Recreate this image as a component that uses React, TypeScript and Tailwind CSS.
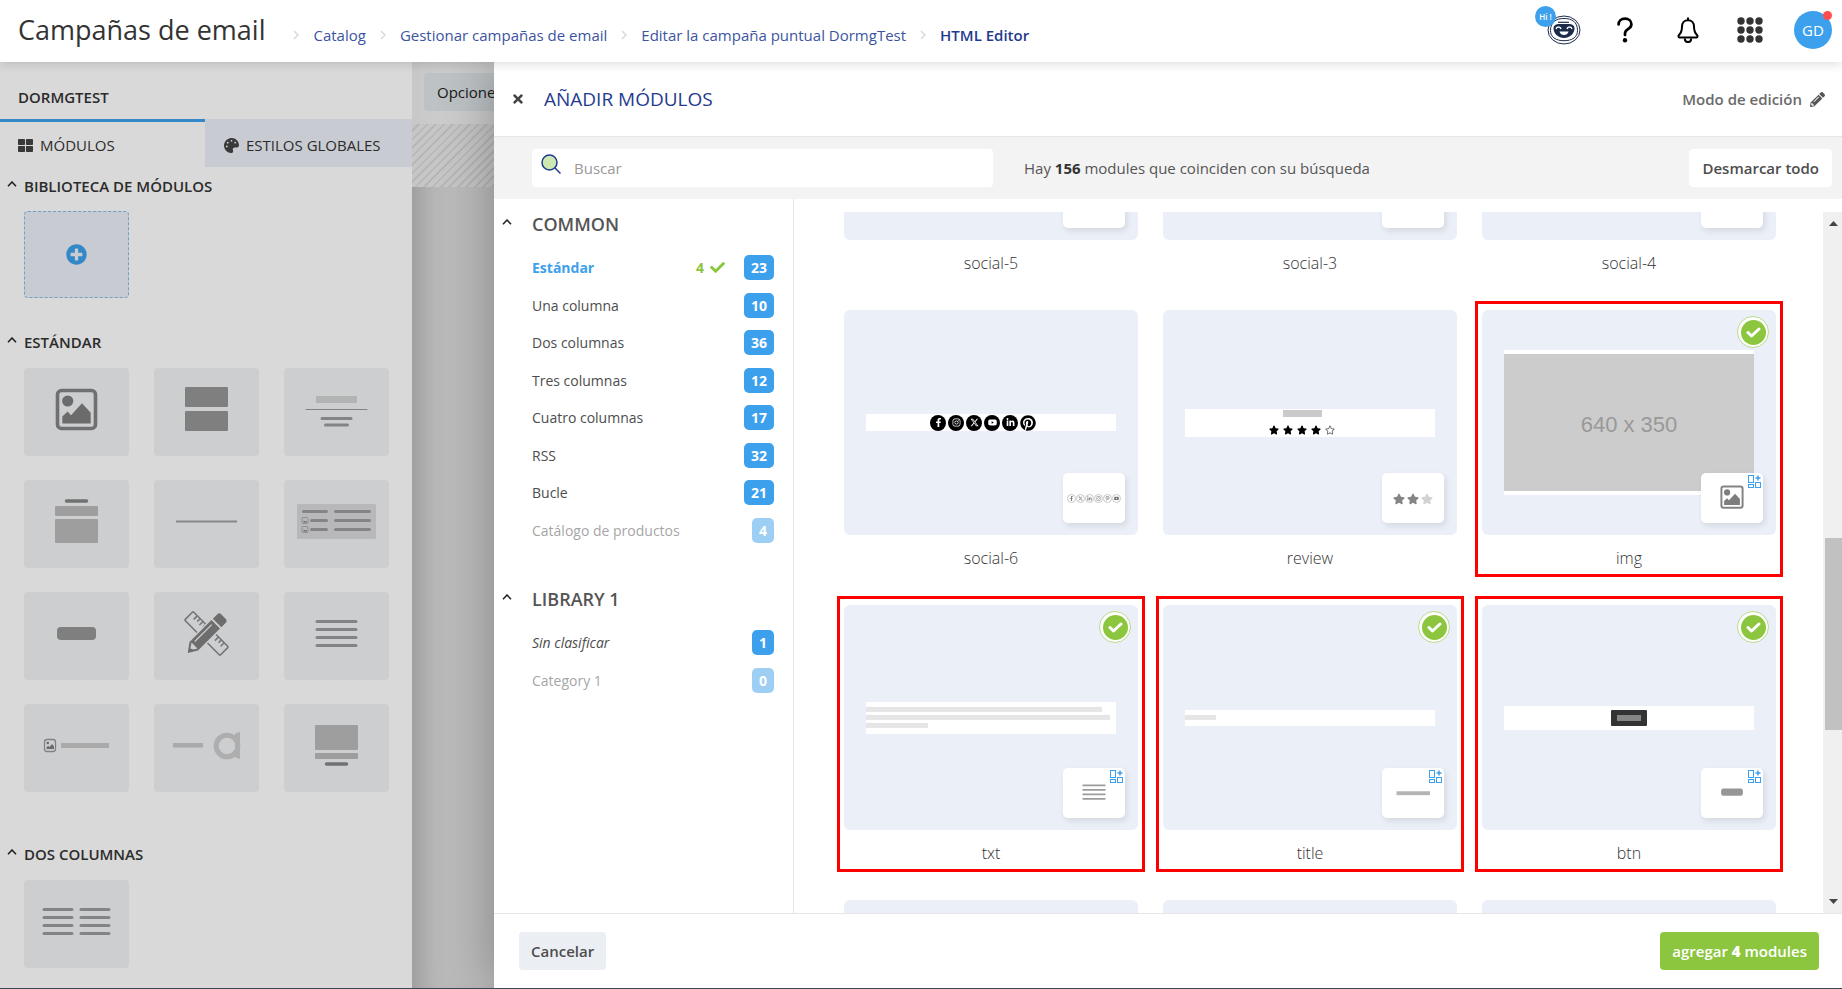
import { useState } from "react";
import type { ReactNode } from "react";
import {
  FaCheck,
  FaFacebookF,
  FaInstagram,
  FaLinkedinIn,
  FaPalette,
  FaPencilAlt,
  FaPinterest,
  FaPinterestP,
  FaPlusCircle,
  FaRegStar,
  FaStar,
  FaThLarge,
  FaTimes,
  FaYoutube,
} from "react-icons/fa";
import { FaXTwitter } from "react-icons/fa6";

/* ---------- glyphs for modules, all drawn on a 105x88 board ---------- */

function Board({ children }: { children: ReactNode }) {
  return (
    <svg viewBox="0 0 105 88" className="h-full w-full" fill="none" aria-hidden="true">
      {children}
    </svg>
  );
}

function Picture() {
  return (
    <g>
      <rect x="33.5" y="22.5" width="38" height="38" rx="4" stroke="#848484" strokeWidth="3.6" />
      <circle cx="43.7" cy="33" r="5.6" fill="#7e7e7e" />
      <path d="M38.3 55.5v-7l5.4-5 3.3 3.8 11-12 8.7 9.4v10.8z" fill="#7e7e7e" />
    </g>
  );
}

const glyphs: Record<string, ReactNode> = {
  image: <Picture />,
  blocks: (
    <g fill="#969696">
      <rect x="31" y="19" width="43" height="20" rx="1" />
      <rect x="31" y="43" width="43" height="20" rx="1" />
    </g>
  ),
  header: (
    <g strokeLinecap="round" stroke="#9c9c9c">
      <rect x="32" y="28" width="41" height="7" fill="#d2d4d3" stroke="none" />
      <path d="M22 41.5h61" strokeWidth="1" />
      <path d="M38 50.5h29M41.5 57h22" strokeWidth="3" />
    </g>
  ),
  card: (
    <g>
      <path d="M42.5 21h20" stroke="#858585" strokeWidth="3.5" strokeLinecap="round" />
      <rect x="31" y="26" width="43" height="10" rx="1" fill="#bababa" />
      <rect x="31" y="39" width="43" height="24" rx="1" fill="#bababa" />
    </g>
  ),
  divider: <path d="M22 41.5h61" stroke="#a0a0a0" strokeWidth="2" />,
  table: (
    <g>
      <rect x="13" y="24" width="79" height="35" rx="1" fill="#d9d9dc" />
      <path
        d="M19.5 31.5h23M51.5 31.5h34M27.5 40.5h15M51.5 40.5h34M27.5 49.5h15M51.5 49.5h34"
        stroke="#9c9c9c"
        strokeWidth="3"
        strokeLinecap="round"
      />
      <g stroke="#a8a8a8">
        <rect x="18" y="37.5" width="6" height="6" rx="1" />
        <rect x="18" y="46.5" width="6" height="6" rx="1" />
      </g>
      <path d="M19.5 42.5v-2l2 1 1.5-.5v1.5zM19.5 51.5v-2l2 1 1.5-.5v1.5z" fill="#7e7e7e" />
    </g>
  ),
  button: <rect x="33" y="35" width="39" height="13" rx="4" fill="#969696" />,
  design: (
    <g transform="translate(52.5 41.5)">
      <g transform="rotate(45)" stroke="#8a8a8a" strokeWidth="1.6">
        <rect x="-25" y="-6" width="50" height="12" rx="1" />
        <path d="M-19-6v5M-15-6v4M-11-6v5M-7-6v4M11-6v5M15-6v4M19-6v5" />
      </g>
      <g transform="rotate(-45)">
        <path d="M-28 0l10-7.5H27v15h-45z" fill="#f1f2f5" />
        <path d="M-27 .5l9-6.5h31v12h-31z" fill="#808080" />
        <path d="M-22-.8l5-3.4v8.4l-3.5-2z" fill="#f1f2f5" />
        <path d="M-14-2.6h24" stroke="#f1f2f5" strokeWidth="1.3" />
        <path d="M15-6h6a3 3 0 013 3v6a3 3 0 01-3 3h-6z" fill="#808080" />
      </g>
    </g>
  ),
  text: (
    <path
      d="M33 29.5h39M33 37.5h39M33 45.5h39M33 53.5h39"
      stroke="#9c9c9c"
      strokeWidth="3"
      strokeLinecap="round"
    />
  ),
  imageText: (
    <g>
      <rect x="20.5" y="35.5" width="11" height="12" rx="2.5" stroke="#9a9a9a" strokeWidth="1.3" />
      <circle cx="23.8" cy="39" r="1.3" fill="#7e7e7e" />
      <path d="M22.5 45v-2l1.8-1 1.2 1 2.5-3 2 2.5V45z" fill="#7e7e7e" />
      <rect x="37" y="39" width="48" height="5" fill="#c8c8c8" />
    </g>
  ),
  textLogo: (
    <g>
      <rect x="19" y="39" width="30" height="4.5" fill="#c8c8c8" />
      <circle cx="73" cy="42" r="10.8" stroke="#cdcdcd" strokeWidth="5" />
      <path d="M81 29.5l5-1.8V55l-5-1.5z" fill="#cdcdcd" />
    </g>
  ),
  hero: (
    <g>
      <rect x="31" y="21" width="43" height="25" rx="1" fill="#bababa" />
      <rect x="31" y="49" width="43" height="6" rx="1" fill="#bababa" />
      <path d="M42.5 60h20" stroke="#858585" strokeWidth="3.5" strokeLinecap="round" />
    </g>
  ),
  twoText: (
    <path
      d="M20 29.5h28M20 37.5h28M20 45.5h28M20 53.5h28M57 29.5h28M57 37.5h28M57 45.5h28M57 53.5h28"
      stroke="#9c9c9c"
      strokeWidth="3"
      strokeLinecap="round"
    />
  ),
  title: <rect x="23" y="40" width="60" height="7" fill="#b4b4b4" />,
};

const standardTiles = [
  "image", "blocks", "header", "card", "divider", "table",
  "button", "design", "text", "imageText", "textLogo", "hero",
];

function Caret() {
  return (
    <svg viewBox="0 0 10 6" className="h-[6px] w-[10px]" fill="none" stroke="#222" strokeWidth="1.5" aria-hidden="true">
      <path d="M1 5.2L5 1l4 4.2" />
    </svg>
  );
}

/* ---------- top bar ---------- */

const crumbs = ["Catalog", "Gestionar campañas de email", "Editar la campaña puntual DormgTest"];

function CrumbArrow() {
  return (
    <svg viewBox="0 0 6 10" className="h-[10px] w-[6px]" fill="none" stroke="#d9d9d9" strokeWidth="1.5" aria-hidden="true">
      <path d="M1 1l4 4-4 4" />
    </svg>
  );
}

function TopBar() {
  return (
    <header className="relative z-30 flex h-[62px] shrink-0 items-center justify-between bg-white pr-[10px] pb-[2px] pl-[18px] shadow-[0_2px_10px_rgba(0,0,0,0.14)]">
      <div className="flex items-baseline">
        <h1 className="text-[27px] leading-[38px] text-[#333]">Campañas de email</h1>
        <nav aria-label="Breadcrumb" className="ml-[28px] flex items-center text-[15px] text-[#3c54a0]">
          {crumbs.map((c) => (
            <span key={c} className="flex items-center">
              <CrumbArrow />
              <a href="#" className="mx-[14px]">{c}</a>
            </span>
          ))}
          <CrumbArrow />
          <span className="ml-[14px] font-semibold text-[#1f3b8f]">HTML Editor</span>
        </nav>
      </div>
      <div className="flex items-center">
        <button type="button" aria-label="Asistente" className="relative mr-[36px] h-[30px] w-[34px]">
          <svg viewBox="0 0 34 30" className="h-full w-full" fill="none" aria-hidden="true">
            <ellipse cx="17" cy="15" rx="16" ry="14" stroke="#1d2b4b" strokeWidth="1" />
            <path d="M7 23C4.5 21 3.5 18.5 3.5 15.5 3.5 7 9 3.5 17 3.5S30.5 7 30.5 15.5c0 3-1 5.5-3.5 7.5-3 2-6 2.7-10 2.7S10 25 7 23z" stroke="#1d2b4b" strokeWidth="1" />
            <path d="M11 7.3h11" stroke="#1d2b4b" strokeWidth="1.2" />
            <path d="M6.5 13.5c0-3.5 3-4.5 5.5-4.5h10c2.5 0 5.5 1 5.5 4.5 0 5-5 9.5-10.5 9.5S6.5 18.5 6.5 13.5z" fill="#1d2b4b" />
            <path d="M9 14c.5-2.6 4.5-2.6 5 0M20 14c.5-2.6 4.5-2.6 5 0" stroke="#fff" strokeWidth="1.4" />
            <path d="M12.5 16.5h9c-.5 2.5-2.5 3.5-4.5 3.5s-4-1-4.5-3.5z" fill="#fff" />
          </svg>
          <span className="absolute -top-[9px] -left-[12px] flex size-[21px] items-center justify-center rounded-full bg-[#3da0ec] text-[8px] font-semibold text-white">
            Hi !
          </span>
        </button>
        <button type="button" aria-label="Ayuda" className="mr-[44px] h-[26px] w-[16px]">
          <svg viewBox="0 0 16 26" className="h-full w-full" fill="none" aria-hidden="true">
            <path d="M1.6 7.5C1.6 4 4.3 1.7 8 1.7s6.4 2.3 6.4 5.5c0 2.6-1.6 3.9-3.4 5-2 1.3-3 2.3-3 4.4v1.4" stroke="#000" strokeWidth="2.7" strokeLinecap="round" />
            <circle cx="8" cy="23.3" r="2.2" fill="#000" />
          </svg>
        </button>
        <button type="button" aria-label="Notificaciones" className="mr-[38px] h-[26px] w-[22px]">
          <svg viewBox="0 0 22 26" className="h-full w-full" fill="none" aria-hidden="true">
            <path d="M11 1.2v2M11 3.2c-4 0-6 3-6 6.3 0 5-1.2 6.8-3 8.5-1 1-.6 2.6.8 2.6h16.4c1.4 0 1.8-1.6.8-2.6-1.8-1.7-3-3.5-3-8.5 0-3.3-2-6.3-6-6.3z" stroke="#000" strokeWidth="2" strokeLinecap="round" />
            <path d="M7.8 21.5c0 4.8 6.4 4.8 6.4 0" stroke="#000" strokeWidth="2" />
          </svg>
        </button>
        <button type="button" aria-label="Aplicaciones" className="mr-[31px] size-[26px]">
          <svg viewBox="0 0 26 26" className="h-full w-full" fill="#333" aria-hidden="true">
            {[4, 13, 22].map((y) => [4, 13, 22].map((x) => <circle key={`${x}-${y}`} cx={x} cy={y} r="3.7" />))}
          </svg>
        </button>
        <button type="button" className="relative flex size-[38px] items-center justify-center rounded-full bg-[#3da0ec] text-[15px] text-white">
          GD
          <span className="absolute top-0 right-0 size-[9px] rounded-full bg-[#ff4d4d]" />
        </button>
      </div>
    </header>
  );
}

/* ---------- sidebar ---------- */

function SideHeading({ children }: { children: ReactNode }) {
  return (
    <h3 className="flex items-center gap-[7px] pl-[7px] text-[15px] leading-5 font-semibold text-[#333]">
      <span className="pb-1"><Caret /></span>
      {children}
    </h3>
  );
}

function Tile({ name }: { name: string }) {
  return (
    <button type="button" aria-label={name} className="h-[88px] w-[105px] rounded-[4px] bg-[#f1f2f5]">
      <Board>{glyphs[name]}</Board>
    </button>
  );
}

function Sidebar() {
  return (
    <aside className="relative z-10 flex w-[412px] shrink-0 flex-col overflow-hidden bg-white">
      <h2 className="px-[18px] pt-[25px] pb-[12px] text-[15px] leading-5 font-semibold text-[#333]">DORMGTEST</h2>
      <div className="flex h-[48px] text-[15px] text-[#333]">
        <button type="button" className="flex w-[205px] items-center gap-[7px] border-t-[3px] border-[#3da0ec] pt-px pl-[18px]">
          <FaThLarge className="size-[15px] text-[#444]" />
          MÓDULOS
        </button>
        <button type="button" className="flex flex-1 items-center gap-[7px] bg-[#ebeff6] pt-[4px] pl-[19px]">
          <FaPalette className="size-[15px] text-[#444]" />
          ESTILOS GLOBALES
        </button>
      </div>
      <div className="pt-[9px]">
        <SideHeading>BIBLIOTECA DE MÓDULOS</SideHeading>
        <button
          type="button"
          aria-label="Añadir módulo"
          className="mt-[15px] ml-[24px] flex h-[87px] w-[105px] items-center justify-center rounded-[4px] border border-dashed border-[#85bce8] bg-[#ebeff6]"
        >
          <FaPlusCircle className="size-[21px] text-[#3da0ec]" />
        </button>
      </div>
      <div className="pt-[34px]">
        <SideHeading>ESTÁNDAR</SideHeading>
        <div className="mt-[16px] ml-[24px] grid w-fit grid-cols-3 gap-x-[25px] gap-y-[24px]">
          {standardTiles.map((t) => <Tile key={t} name={t} />)}
        </div>
      </div>
      <div className="pt-[52px]">
        <SideHeading>DOS COLUMNAS</SideHeading>
        <div className="mt-[16px] ml-[24px]">
          <Tile name="twoText" />
        </div>
      </div>
    </aside>
  );
}

/* ---------- categories ---------- */

type Category = { name: string; count: number; off?: boolean; italic?: boolean };

const common: Category[] = [
  { name: "Estándar", count: 23 },
  { name: "Una columna", count: 10 },
  { name: "Dos columnas", count: 36 },
  { name: "Tres columnas", count: 12 },
  { name: "Cuatro columnas", count: 17 },
  { name: "RSS", count: 32 },
  { name: "Bucle", count: 21 },
  { name: "Catálogo de productos", count: 4, off: true },
];

const library: Category[] = [
  { name: "Sin clasificar", count: 1, italic: true },
  { name: "Category 1", count: 0, off: true },
];

function CategoryRow({ item, active, picked, onSelect }: { item: Category; active: boolean; picked: number; onSelect: () => void }) {
  return (
    <li>
      <button
        type="button"
        onClick={onSelect}
        disabled={item.off}
        className={`flex h-full w-full items-center text-[14px] ${active ? "font-bold text-[#3da0ec]" : "font-medium text-[#4d4d4d]"} ${item.off ? "opacity-50" : ""} ${item.italic ? "italic" : ""}`}
      >
        <span className="flex-1 text-left">{item.name}</span>
        {active && (
          <span className="mr-[19px] flex items-center gap-[6px] text-[#8cc63f]">
            {picked} <FaCheck className="size-[15px]" />
          </span>
        )}
        <span className="flex h-[25px] items-center rounded-[5px] bg-[#3da0ec] px-[7px] font-bold text-white not-italic">
          {item.count}
        </span>
      </button>
    </li>
  );
}

function GroupHeading({ children }: { children: ReactNode }) {
  return (
    <h3 className="flex items-center gap-[20px] pl-[8px] text-[18px] leading-6 font-semibold text-[#555]">
      <span className="pb-[5px]"><Caret /></span>
      {children}
    </h3>
  );
}

function Categories() {
  const [active, setActive] = useState("Estándar");
  const row = (item: Category) => (
    <CategoryRow key={item.name} item={item} active={active === item.name} picked={4} onSelect={() => setActive(item.name)} />
  );
  return (
    <nav aria-label="Categorías" className="w-[300px] shrink-0 border-r border-[#e6e6e6] pt-[13px]">
      <GroupHeading>COMMON</GroupHeading>
      <ul className="mt-[13px] mr-[19px] ml-[38px] grid h-[300px] auto-rows-fr">{common.map(row)}</ul>
      <div className="pt-[38px]">
        <GroupHeading>LIBRARY 1</GroupHeading>
      </div>
      <ul className="mt-[13px] mr-[19px] ml-[38px] grid h-[75px] auto-rows-fr">{library.map(row)}</ul>
    </nav>
  );
}

/* ---------- module cards ---------- */

const socials = [FaFacebookF, FaInstagram, FaXTwitter, FaYoutube, FaLinkedinIn];
const smallSocials = [FaFacebookF, FaXTwitter, FaLinkedinIn, FaInstagram, FaPinterestP, FaYoutube];

function Redacted({ className }: { className: string }) {
  return <div className={`h-[5px] bg-[#e6e6e6] ${className}`} />;
}

const socialPreview = (
  <div className="flex h-[17px] items-center justify-center gap-[2px] bg-white pr-[16px]">
    {socials.map((Icon, i) => (
      <span key={i} className="flex size-4 items-center justify-center rounded-full bg-black text-white">
        <Icon className="size-[9px]" />
      </span>
    ))}
    <FaPinterest className="size-4 text-black" />
  </div>
);

const socialThumb = (
  <div className="flex h-full items-center justify-center">
    {smallSocials.map((Icon, i) => (
      <span key={i} className="flex size-[9px] items-center justify-center rounded-full border border-[#c8c8c8] text-[#777]">
        <Icon className="size-[5px]" />
      </span>
    ))}
  </div>
);

const reviewPreview = (
  <div className="flex h-[28px] flex-col items-center gap-[8px] bg-white pt-px pr-[16px]">
    <div className="h-[7px] w-[39px] bg-[#cacaca]" />
    <div className="flex gap-[4px] text-black">
      {[0, 1, 2, 3].map((i) => <FaStar key={i} className="size-[10px]" />)}
      <FaRegStar className="size-[10px] text-[#666]" />
    </div>
  </div>
);

const reviewThumb = (
  <div className="flex h-full items-center justify-center gap-[2px] text-[#858585]">
    <FaStar className="size-3" />
    <FaStar className="size-3" />
    <FaStar className="size-3 text-[#d2d2d2]" />
  </div>
);

const imagePreview = (
  <div className="bg-white py-1">
    <div className="flex h-[137px] items-center justify-center bg-[#ccc] pt-1 font-['Liberation_Sans',Arial,sans-serif] text-[22px] text-[#999]">
      640 x 350
    </div>
  </div>
);

const textPreview = (
  <div className="flex h-[32px] flex-col justify-center gap-[3px] bg-white">
    <Redacted className="w-[236px]" />
    <Redacted className="w-[244px]" />
    <Redacted className="w-[62px]" />
  </div>
);

const titlePreview = (
  <div className="flex h-[16px] items-center bg-white">
    <Redacted className="w-[31px]" />
  </div>
);

const buttonPreview = (
  <div className="flex h-[24px] items-center justify-center bg-white">
    <div className="flex h-[16px] w-[36px] items-center justify-center rounded-[1px] bg-[#333]">
      <div className="h-[6px] w-[24px] bg-[#858585]" />
    </div>
  </div>
);

type Module = { name: string; preview?: ReactNode; thumb?: ReactNode; selected?: boolean };

const modules: Module[] = [
  { name: "social-5" },
  { name: "social-3" },
  { name: "social-4" },
  { name: "social-6", preview: socialPreview, thumb: socialThumb },
  { name: "review", preview: reviewPreview, thumb: reviewThumb },
  { name: "img", preview: imagePreview, thumb: <Board>{glyphs.image}</Board>, selected: true },
  { name: "txt", preview: textPreview, thumb: <Board>{glyphs.text}</Board>, selected: true },
  { name: "title", preview: titlePreview, thumb: <Board>{glyphs.title}</Board>, selected: true },
  { name: "btn", preview: buttonPreview, thumb: <Board>{glyphs.button}</Board>, selected: true },
  { name: "" },
  { name: "" },
  { name: "" },
];

function WidgetMark() {
  return (
    <svg viewBox="0 0 13 13" className="absolute top-[2px] right-[2px] size-[13px]" fill="none" stroke="#3da0ec" aria-hidden="true">
      <rect x=".5" y=".5" width="5" height="7" />
      <rect x=".5" y="9.5" width="5" height="3" />
      <rect x="7.5" y="7.5" width="5" height="5" />
      <path d="M10 .5v5M7.5 3h5" strokeWidth="1.5" />
    </svg>
  );
}

function ModuleCard({ mod }: { mod: Module }) {
  return (
    <article className="relative h-[267px]">
      <div className="relative flex h-[225px] flex-col justify-center rounded-[6px] bg-[#ebf0f8] px-[22px]">
        {mod.preview}
        <div className="absolute right-[13px] bottom-[12px] h-[50px] w-[62px] rounded-[5px] bg-white pt-px shadow-[2px_3px_6px_rgba(0,0,0,0.1)]">
          {mod.thumb}
          {mod.selected && <WidgetMark />}
        </div>
        {mod.selected && (
          <span className="absolute top-[6px] right-[7px] flex size-[32px] items-center justify-center rounded-full border border-[#b9da8c] bg-white">
            <span className="flex size-[25px] items-center justify-center rounded-full bg-[#8cc63f]">
              <svg viewBox="0 0 15 11" className="h-[11px] w-[15px]" fill="none" stroke="#fff" strokeWidth="3" strokeLinecap="round" strokeLinejoin="round" aria-hidden="true">
                <path d="M2 5.5l3.5 3.5L13 2" />
              </svg>
            </span>
          </span>
        )}
      </div>
      <p className="mt-[12px] text-center text-[16px] leading-[22px] font-light text-[#333]">{mod.name}</p>
      {mod.selected && <div className="absolute -inset-x-[7px] -top-[9px] bottom-0 border-[3px] border-[#f00]" />}
    </article>
  );
}

function ScrollTrack() {
  return (
    <div className="flex w-[19px] shrink-0 flex-col items-center bg-[#f0f0f0] pl-[2px]">
      <svg viewBox="0 0 9 5" className="mt-[9px] h-[5px] w-[9px]" fill="#444" aria-hidden="true"><path d="M0 5l4.5-5L9 5z" /></svg>
      <div className="flex-[312]" />
      <div className="h-[192px] w-full bg-[#c1c1c1]" />
      <div className="flex-[169]" />
      <svg viewBox="0 0 9 5" className="mb-[9px] h-[5px] w-[9px]" fill="#444" aria-hidden="true"><path d="M0 0l4.5 5L9 0z" /></svg>
    </div>
  );
}

/* ---------- drawer ---------- */

function Drawer() {
  const [query, setQuery] = useState("");
  return (
    <section className="absolute inset-y-0 right-0 left-[494px] z-20 flex flex-col bg-white shadow-[0_0_50px_rgba(0,0,0,0.3)]">
      <div className="flex h-[75px] shrink-0 items-center justify-between border-b border-[#e6e6e6] px-[17px]">
        <div className="flex items-center gap-[19px]">
          <button type="button" aria-label="Cerrar"><FaTimes className="size-[14px] text-[#444]" /></button>
          <h2 className="text-[19px] text-[#1f3b8f]">AÑADIR MÓDULOS</h2>
        </div>
        <button type="button" className="flex items-center gap-2 text-[15px] font-semibold text-[#6a6a6a]">
          Modo de edición <FaPencilAlt className="size-[15px] text-[#555]" />
        </button>
      </div>
      <div className="flex h-[62px] shrink-0 items-center bg-[#f3f3f3] pr-[10px] pl-[38px] text-[15px]">
        <label className="flex h-[38px] w-[461px] items-center gap-[13px] rounded-[4px] bg-white pl-[9px]">
          <svg viewBox="0 0 20 20" className="mb-[8px] size-[20px]" stroke="#1f3b8f" strokeWidth="1.5" aria-label="Buscar">
            <circle cx="8.5" cy="8.5" r="7.5" fill="#cfe8b2" />
            <path d="M14 14l5.5 5.5" />
          </svg>
          <input
            type="text"
            placeholder="Buscar"
            value={query}
            onChange={(e) => setQuery(e.target.value)}
            className="min-w-0 flex-1 bg-transparent outline-none placeholder:text-[#999]"
          />
        </label>
        <p className="ml-[31px] flex-1 text-[#555]">
          Hay <b className="font-bold text-[#333]">156</b> modules que coinciden con su búsqueda
        </p>
        <button type="button" className="h-[38px] rounded-[4px] bg-white px-[13px] font-semibold text-[#4d4d4d]">Desmarcar todo</button>
      </div>
      <div className="flex min-h-0 flex-1">
        <Categories />
        <div className="mt-[13px] flex min-w-0 flex-1 overflow-hidden">
          <div className="-mt-[197px] grid flex-1 auto-rows-max grid-cols-3 content-start gap-x-[25px] gap-y-[28px] pr-[47px] pl-[50px]">
            {modules.map((m, i) => <ModuleCard key={i} mod={m} />)}
          </div>
          <ScrollTrack />
        </div>
      </div>
      <footer className="flex h-[75px] shrink-0 items-center justify-between border-t border-[#e6e6e6] pr-[23px] pl-[25px] text-[15px]">
        <button type="button" className="h-[38px] rounded-[4px] bg-[#ebeef3] px-[12px] font-semibold text-[#4d4d4d]">Cancelar</button>
        <button type="button" className="h-[38px] rounded-[4px] bg-[#8cc63f] px-[12px] font-semibold text-white">
          agregar <b className="font-extrabold">4</b> modules
        </button>
      </footer>
    </section>
  );
}

export default function App() {
  return (
    <div className="flex h-screen flex-col overflow-hidden border-b border-[#3f4657] bg-white font-['Open_Sans',sans-serif]">
      <TopBar />
      <main className="relative flex min-h-0 flex-1 overflow-hidden">
        <Sidebar />
        <div className="flex flex-1 flex-col bg-[#dcdcdc] shadow-[inset_28px_0_28px_-20px_rgba(0,0,0,0.2)]">
          <div className="flex h-[62px] items-center bg-[#f3f3f3]/85 pb-[2px] pl-[12px]">
            <button type="button" className="h-[38px] rounded-[4px] bg-[#dfe4e8] px-[13px] text-[15px] text-[#222]">Opciones</button>
          </div>
          <div className="h-[63px] bg-[repeating-linear-gradient(135deg,#e9e9e9_0px,#e9e9e9_4px,#d8d8d8_4px,#d8d8d8_6px)]" />
        </div>
        <div className="absolute inset-0 z-10 bg-black/15" />
        <Drawer />
      </main>
    </div>
  );
}
